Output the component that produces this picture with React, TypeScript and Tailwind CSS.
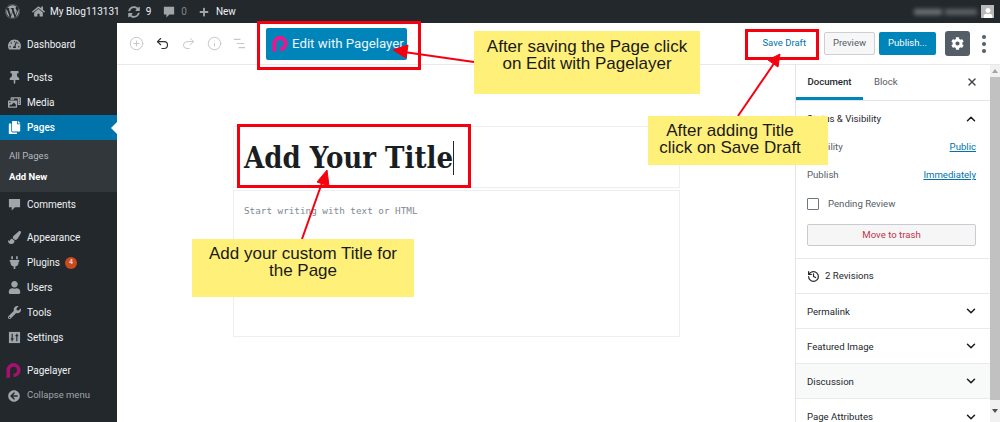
import { ChevronDown, ChevronUp, CirclePlus, History, Info, Redo2, Undo2, X } from "lucide-react"
import type { ComponentType, ReactNode } from "react"
import {
  FaArrowCircleLeft,
  FaCog,
  FaCopy,
  FaHome,
  FaPaintBrush,
  FaPhotoVideo,
  FaPlug,
  FaPlus,
  FaSyncAlt,
  FaTachometerAlt,
  FaThumbtack,
  FaUser,
  FaWordpress,
  FaWrench,
} from "react-icons/fa"

type MenuItem = { label: string; icon: ComponentType<{ className?: string }>; gap?: boolean; badge?: string; active?: boolean }

function BubbleIcon({ className }: { className?: string }) {
  return (
    <svg viewBox="0 0 14 14" className={className} fill="currentColor">
      <path d="M1 1h12v9H7.5L4 13.5V10H1z" />
    </svg>
  )
}

function SlidersIcon({ className }: { className?: string }) {
  return (
    <svg viewBox="0 0 14 14" className={className}>
      <rect x="1" y="1" width="12" height="12" fill="currentColor" />
      <path d="M4.5 3v8M9.5 3v8M3 8.5h3M8 5h3" stroke="#23282d" strokeWidth="1.2" />
    </svg>
  )
}

const menu: MenuItem[] = [
  { label: "Posts", icon: FaThumbtack, gap: true },
  { label: "Media", icon: FaPhotoVideo },
  { label: "Pages", icon: FaCopy, active: true },
]

const menuBottom: MenuItem[] = [
  { label: "Comments", icon: BubbleIcon },
  { label: "Appearance", icon: FaPaintBrush, gap: true },
  { label: "Plugins", icon: FaPlug, badge: "4" },
  { label: "Users", icon: FaUser },
  { label: "Tools", icon: FaWrench },
  { label: "Settings", icon: SlidersIcon },
]

function PagelayerLogo({ className }: { className?: string }) {
  return (
    <svg viewBox="0 0 20 20" className={className} fill="none" stroke="currentColor">
      <path d="M3 19.5V9.5a7 7 0 1 1 7 7" strokeWidth="4.8" />
    </svg>
  )
}

function SideRow({ item }: { item: MenuItem }) {
  const Icon = item.icon
  return (
    <div
      className={`relative flex h-[25px] items-center ${item.gap ? "mt-2" : ""} ${
        item.active ? "bg-[#0073aa] font-medium text-white" : "text-[#eef1f3]"
      }`}
    >
      <span className={`flex w-[27px] justify-center pl-[1px] ${item.active ? "text-white" : "text-[#a0a5aa]"}`}>
        <Icon className="size-[13px]" />
      </span>
      <span>{item.label}</span>
      {item.badge ? (
        <span className="ml-[5px] grid size-[12px] place-items-center rounded-full bg-[#ca4a1f] text-[7px] text-white">{item.badge}</span>
      ) : null}
      {item.active ? (
        <span className="absolute right-0 top-[7px] size-0 border-y-[6px] border-r-[6px] border-y-transparent border-r-white" />
      ) : null}
    </div>
  )
}

function Sidebar() {
  return (
    <aside className="h-full w-[117px] shrink-0 bg-[#23282d] pt-[9px] text-[10px]">
      <SideRow item={{ label: "Dashboard", icon: FaTachometerAlt }} />
      {menu.map((item) => (
        <SideRow key={item.label} item={item} />
      ))}
      <div className="flex h-[52px] flex-col justify-center gap-[8px] bg-[#32373c] pl-[9px] text-[9.5px] leading-[13px]">
        <div className="text-[#b4b9be]">All Pages</div>
        <div className="font-bold text-white">Add New</div>
      </div>
      {menuBottom.map((item) => (
        <SideRow key={item.label} item={item} />
      ))}
      <div className="mt-2 flex h-[25px] items-center text-[#eef1f3]">
        <span className="flex w-[27px] justify-center text-[#a4116f]">
          <PagelayerLogo className="size-[15px]" />
        </span>
        <span>Pagelayer</span>
      </div>
      <div className="flex h-[25px] items-center text-[9.5px] text-[#a0a5aa]">
        <span className="flex w-[27px] justify-center">
          <FaArrowCircleLeft className="size-[12px]" />
        </span>
        <span>Collapse menu</span>
      </div>
    </aside>
  )
}

function AdminBar() {
  return (
    <header className="flex h-[23px] shrink-0 items-center bg-[#23282d] text-[10px] text-[#eef1f3]">
      <FaWordpress className="ml-[5px] size-[15px] text-[#a0a5aa]" />
      <FaHome className="ml-[12px] size-[13px] text-[#a0a5aa]" />
      <span className="ml-[5px]">My Blog113131</span>
      <FaSyncAlt className="ml-[8px] size-[12px] text-[#a0a5aa]" />
      <span className="ml-[6px]">9</span>
      <BubbleIcon className="ml-[12px] size-[12px] text-[#a0a5aa]" />
      <span className="ml-[6px] text-[#7e8489]">0</span>
      <FaPlus className="ml-[12px] size-[10px] text-[#a0a5aa]" />
      <span className="ml-[7px]">New</span>
      <div className="ml-auto mr-[6px] flex items-center gap-[4px]">
        <div className="flex gap-[3px] blur-[2px]">
          <span className="h-[6px] w-[28px] bg-[#6b7075]" />
          <span className="h-[6px] w-[32px] bg-[#5c6166]" />
        </div>
        <div className="flex size-[13px] items-end justify-center overflow-hidden bg-[#b9b9b9]">
          <FaUser className="size-[10px] text-white" />
        </div>
      </div>
    </header>
  )
}

function Toolbar() {
  return (
    <div className="flex h-[42px] shrink-0 items-center border-b border-[#e6e8ea] bg-white">
      <div className="ml-[12px] flex items-center gap-[11px] text-[#c4c8cc]">
        <CirclePlus className="size-[15px]" strokeWidth={1.6} />
        <Undo2 className="size-[15px] text-[#2b3036]" strokeWidth={1.8} />
        <Redo2 className="size-[15px]" strokeWidth={1.6} />
        <Info className="size-[15px]" strokeWidth={1.6} />
        <svg viewBox="0 0 14 14" className="size-[13px]" stroke="currentColor" strokeWidth="1.3">
          <path d="M1 2.5h7M4 7h8M6 11.5h7" />
        </svg>
      </div>
      <button className="ml-[20px] flex h-[32px] w-[141px] shrink-0 items-center whitespace-nowrap rounded-[2px] bg-[#0085ba] pl-[6px] text-[13.25px] text-[#eef6fa]">
        <PagelayerLogo className="mr-[4px] size-[16px] text-[#f0148c]" />
        Edit with Pagelayer
      </button>
      <span className="ml-auto whitespace-nowrap text-[9.5px] text-[#0073aa]">Save Draft</span>
      <button className="ml-[18px] h-[23px] w-[51px] shrink-0 rounded-[2px] border border-[#ccd0d4] bg-[#f7f7f7] text-[9.5px] text-[#555d66]">Preview</button>
      <button className="ml-[4px] h-[23px] w-[57px] shrink-0 rounded-[2px] bg-[#0085ba] text-[9.5px] text-white">Publish...</button>
      <span className="ml-[9px] grid size-[25px] shrink-0 place-items-center rounded-[3px] bg-[#555d66]">
        <FaCog className="size-[13px] text-white" />
      </span>
      <span className="ml-[12px] mr-[14px] flex flex-col gap-[3px]">
        <span className="size-[4px] rounded-full bg-[#555d66]" />
        <span className="size-[4px] rounded-full bg-[#555d66]" />
        <span className="size-[4px] rounded-full bg-[#555d66]" />
      </span>
    </div>
  )
}

function Panel({ label, shaded, last }: { label: string; shaded?: boolean; last?: boolean }) {
  return (
    <div className={`flex h-[35px] shrink-0 items-center justify-between pl-[11px] pr-[12px] text-[#23282d] ${shaded ? "bg-[#f8f9f9]" : ""} ${last ? "" : "border-b border-[#e8eaeb]"}`}>
      <span className="pt-[2px]">{label}</span>
      <ChevronDown className="size-[14px] text-[#191e23]" strokeWidth={2.6} />
    </div>
  )
}

function SettingsSidebar() {
  return (
    <div className="flex w-[195px] shrink-0 flex-col overflow-hidden border-l border-[#e2e4e7] bg-white text-[9.6px]">
      <div className="flex h-[36px] shrink-0 items-stretch border-b border-[#e2e4e7]">
        <div className="flex w-[67px] items-center justify-center border-b-[3px] border-[#0085ba] pt-[3px] font-medium text-[#23282d]">Document</div>
        <div className="flex items-center pl-[11px] text-[#555d66]">Block</div>
        <X className="ml-auto mr-[12px] mt-[11px] size-[12px] text-[#40464d]" strokeWidth={2.8} />
      </div>
      <div className="flex h-[158px] shrink-0 flex-col border-b border-[#e8eaeb] px-[11px] text-[#555d66]">
        <div className="flex h-[36px] shrink-0 items-center justify-between pr-[1px] text-[#23282d]">
          <span>Status &amp; Visibility</span>
          <ChevronUp className="size-[14px] text-[#191e23]" strokeWidth={2.6} />
        </div>
        <div className="mt-[3px] flex justify-between pr-[3px]">
          <span>Visibility</span>
          <span className="text-[#0073aa] underline">Public</span>
        </div>
        <div className="mt-[14px] flex justify-between pr-[3px]">
          <span>Publish</span>
          <span className="text-[#0073aa] underline">Immediately</span>
        </div>
        <div className="mt-[14px] flex items-center gap-[9px]">
          <span className="size-[12px] rounded-[1px] border-[1.5px] border-[#6c7781]" />
          <span>Pending Review</span>
        </div>
        <button className="mr-[3px] mt-[13px] h-[22px] rounded-[2px] border border-[#c8ccd0] bg-[#f6f6f6] text-[#c0324c]">Move to trash</button>
      </div>
      <div className="flex h-[35px] shrink-0 items-center gap-[5px] border-b border-[#e8eaeb] pl-[11px] text-[#23282d]">
        <History className="size-[13px]" strokeWidth={2.2} />
        <span>2 Revisions</span>
      </div>
      <Panel label="Permalink" />
      <Panel label="Featured Image" />
      <Panel label="Discussion" shaded />
      <Panel label="Page Attributes" last />
    </div>
  )
}

function Scrollbar() {
  return (
    <div className="flex w-[10px] shrink-0 flex-col items-center bg-[#f1f1f1]">
      <span className="mt-[4px] size-0 border-x-[3px] border-b-[4px] border-x-transparent border-b-[#a3a3a3]" />
      <span className="mt-[4px] h-[323px] w-full bg-[#c1c1c1]" />
      <span className="mt-[9px] size-0 border-x-[3px] border-t-[4px] border-x-transparent border-t-[#505050]" />
    </div>
  )
}

function Note({ className, children }: { className: string; children: ReactNode }) {
  return <div className={`absolute bg-[#fff07a] text-center font-['Liberation_Sans',sans-serif] text-[17px] leading-[17px] text-[#1a1a1a] ${className}`}>{children}</div>
}

function Annotations() {
  return (
    <>
      <div className="absolute left-[257px] top-[21px] h-[49px] w-[164px] border-[3px] border-[#f5000f]" />
      <div className="absolute left-[745px] top-[29px] h-[31px] w-[74px] border-[3px] border-[#f5000f]" />
      <div className="absolute left-[237px] top-[124px] h-[64px] w-[234px] border-[3px] border-[#f5000f]" />
      <svg viewBox="0 0 1000 422" className="absolute inset-0 size-full" fill="#f5000f" stroke="#f5000f">
        <path d="M474 62 L404 52" strokeWidth="2" />
        <path d="M393 50 L408 45 L406 58 Z" />
        <path d="M738 116 L775 62" strokeWidth="2" />
        <path d="M780 54 L778 67 L768 60 Z" />
        <path d="M302 239 L323 180" strokeWidth="2" />
        <path d="M327 170 L329 186 L317 182 Z" />
      </svg>
      <Note className="left-[474px] top-[31px] h-[63px] w-[226px] pt-[7px]">
        After saving the Page click
        <br />
        on Edit with Pagelayer
      </Note>
      <Note className="left-[648px] top-[116px] h-[49px] w-[180px] pr-[16px] pt-[6px]">
        After adding Title
        <br />
        click on Save Draft
      </Note>
      <Note className="left-[192px] top-[239px] h-[58px] w-[222px] pt-[6px]">
        Add your custom Title for
        <br />
        the Page
      </Note>
    </>
  )
}

export default function App() {
  return (
    <div className="relative flex h-[422px] w-[1000px] flex-col overflow-hidden bg-white font-['Roboto',sans-serif]">
      <AdminBar />
      <div className="flex min-h-0 flex-1">
        <Sidebar />
        <main className="flex min-w-0 flex-1 flex-col">
          <Toolbar />
          <div className="flex min-h-0 flex-1">
            <div className="flex-1 pl-[116px] pt-[61px]">
              <div className="h-[62px] w-[447px] border border-[#eceef0] pl-[10px] pt-[11px]">
                <span className="border-r border-[#23282d] font-['DejaVu_Serif_Condensed','DejaVu_Serif',serif] text-[29px] font-bold leading-[40px] text-[#191e23]">Add Your Title</span>
              </div>
              <div className="mt-[2px] h-[147px] w-[447px] border border-[#eceef0] pl-[10px] pt-[13px] font-['DejaVu_Sans_Mono','Liberation_Mono',monospace] text-[9.3px] text-[#7e8993]">
                Start writing with text or HTML
              </div>
            </div>
            <SettingsSidebar />
            <Scrollbar />
          </div>
        </main>
      </div>
      <Annotations />
    </div>
  )
}
